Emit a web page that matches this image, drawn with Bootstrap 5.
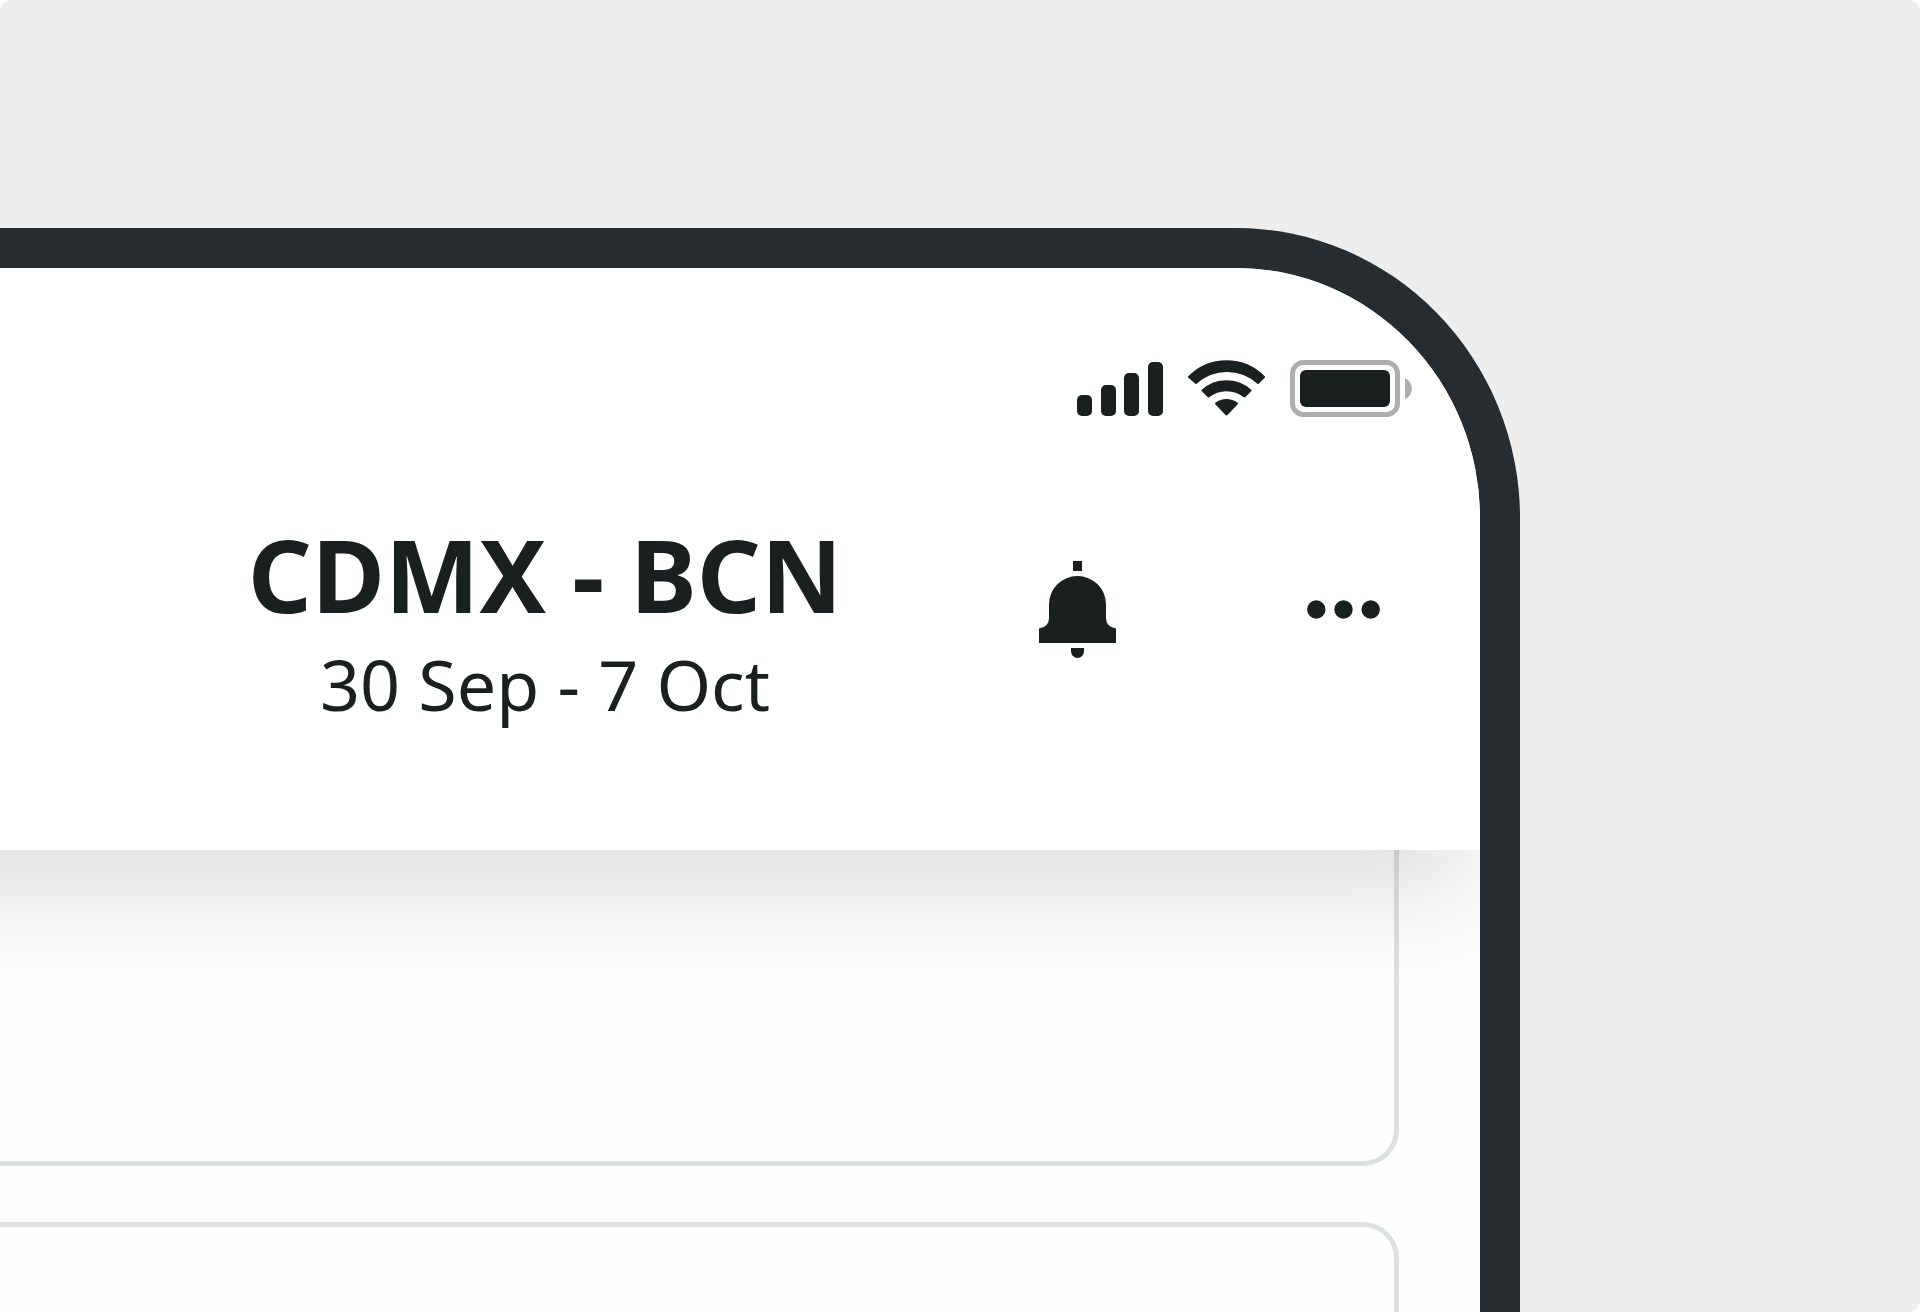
<!DOCTYPE html>
<html lang="en">
<head>
<meta charset="utf-8">
<meta name="viewport" content="width=device-width, initial-scale=1">
<title>CDMX - BCN</title>
<link href="https://cdn.jsdelivr.net/npm/bootstrap@5.3.0/dist/css/bootstrap.min.css" rel="stylesheet">
<style>
  body { background: #fff; color: #1a1f20; font-family: "Noto Sans", sans-serif; }
  .stage { background: #eee; border-radius: 12px; padding-top: 228px; }
  /* The handset runs off the left and bottom edges of the stage */
  .handset {
    margin-left: -430px; margin-right: 400px;
    background: #fefefe;
    border: 40px solid #262c2f; border-bottom: 0;
    border-radius: 284px 284px 0 0 / 290px 290px 0 0;
  }
  .topbar {
    background: #fff; padding: 92px 0 124px; z-index: 1;
    box-shadow: 0 48px 100px -6px rgba(0, 0, 0, .125);
  }
  .status { gap: 24px; padding-right: 68px; margin-bottom: 97px; }
  .title-row { display: grid; grid-template-columns: 1fr auto 1fr; }
  .trip-name { font-size: 100px; line-height: 120px; font-weight: 700; margin-bottom: 8px; }
  .trip-dates { font-size: 70px; line-height: 84px; }
  .actions { gap: 191px; padding: 0 100px 22px 0; }
  .actions .btn { color: inherit; }
  .trips { padding: 0 81px; gap: 56px; }
  .trip-box { border: 5px solid #dde1e1; border-radius: 36px; }
  .trip-first { border-top: 0; border-top-left-radius: 0; border-top-right-radius: 0; height: 316px; }
  .trip-next { border-bottom: 0; border-bottom-left-radius: 0; border-bottom-right-radius: 0; }
</style>
<script src="https://cdn.jsdelivr.net/npm/bootstrap@5.3.0/dist/js/bootstrap.bundle.min.js"></script>
</head>
<body>
<div class="stage vh-100 d-flex flex-column overflow-hidden">
  <div class="handset flex-grow-1 d-flex flex-column overflow-hidden">
    <header class="topbar position-relative">
      <div class="status d-flex justify-content-end align-items-start">
        <svg width="87" height="57" viewBox="0 0 87 57" fill="currentColor" role="img" aria-label="Signal">
          <rect x="0" y="35" width="15" height="21" rx="5"/>
          <rect x="24" y="25" width="15" height="31" rx="5"/>
          <rect x="47" y="13" width="15" height="43" rx="5"/>
          <rect x="71" y="2" width="15" height="54" rx="5"/>
        </svg>
        <svg width="78" height="57" viewBox="0 0 78 57" fill="currentColor" stroke="currentColor" stroke-width="2" stroke-linejoin="round" role="img" aria-label="Wi-Fi">
          <path d="M1 17A52.500 52.500 0 0 1 76 17L70 23A46 46 0 0 0 8 23Z"/>
          <path d="M14.500 30.500A36 36 0 0 1 62.500 30.500L56.500 36.500A29 29 0 0 0 20.500 36.500Z"/>
          <path d="M28 43.500A18 18 0 0 1 49 43.500L38.500 54.500Z"/>
        </svg>
        <svg width="122" height="57" viewBox="0 0 122 57" role="img" aria-label="Battery">
          <rect x="2.500" y="2.500" width="105" height="52" rx="11" fill="none" stroke="#acafae" stroke-width="5"/>
          <rect x="10" y="10" width="90" height="37" rx="6" fill="#1a1f20"/>
          <path d="M115 18.500C124 21.500 124 36 115 39Z" fill="#acafae"/>
        </svg>
      </div>
      <div class="title-row">
        <span></span>
        <div class="text-center text-nowrap">
          <h1 class="trip-name">CDMX - BCN</h1>
          <p class="trip-dates mb-0">30 Sep - 7 Oct</p>
        </div>
        <div class="actions d-flex justify-content-end align-items-center">
          <button type="button" class="btn p-0 border-0 d-flex" aria-label="Notifications">
            <svg width="77" height="97" viewBox="0 0 77 97" fill="currentColor" aria-hidden="true">
              <path d="M34 0h9v10h-9z"/>
              <path d="M10 43.500a28.500 28.500 0 0 1 57 0V57Q67 66 77 67.500V82H0V67.500Q10 66 10 57Z"/>
              <path d="M32 87h13v3.500a6.500 6.500 0 0 1-13 0Z"/>
            </svg>
          </button>
          <button type="button" class="btn p-0 border-0 d-flex" aria-label="More">
            <svg width="73" height="19" viewBox="0 0 73 19" fill="currentColor" aria-hidden="true">
              <circle cx="9.300" cy="9.500" r="9.200"/>
              <circle cx="36.500" cy="9.500" r="9.200"/>
              <circle cx="63.700" cy="9.500" r="9.200"/>
            </svg>
          </button>
        </div>
      </div>
    </header>
    <main class="trips d-flex flex-column flex-grow-1">
      <section class="trip-box trip-first"></section>
      <section class="trip-box trip-next flex-grow-1"></section>
    </main>
  </div>
</div>
</body>
</html>
